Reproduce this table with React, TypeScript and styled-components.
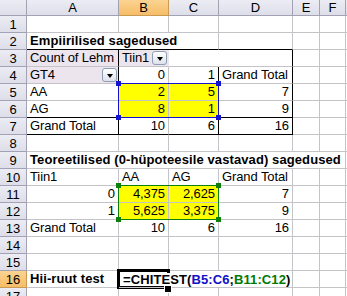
import React from 'react';
import styled, { createGlobalStyle } from 'styled-components';

const GRID = '#c4c4c8';
const DARK = '#000000';
const LAV = '#ece5ee';
const YEL = '#ffff00';
const HEAD_BORDER = '#a2a2b4';

const Global = createGlobalStyle`
  html, body { margin: 0; padding: 0; background: #fff; overflow: hidden; }
  body { font-family: "Liberation Sans", Arial, sans-serif; font-size: 13px; color: #000; }
`;

const Sheet = styled.div`
  position: relative;
  display: grid;
  grid-template-columns: 27px 92px 50px 50px 74px 27px 26px 40px;
  grid-template-rows: 16px repeat(17, 17px);
  width: 386px;
`;

const Head = styled.div<{ $sel?: boolean }>`
  box-sizing: border-box;
  border-right: 1px solid ${(p) => (p.$sel ? '#c89a54' : HEAD_BORDER)};
  border-bottom: 1px solid ${(p) => (p.$sel ? '#c89a54' : HEAD_BORDER)};
  background: ${(p) => (p.$sel ? 'linear-gradient(#fbd391, #f6bd68)' : 'linear-gradient(#ececf4, #dedeea)')};
  display: flex;
  align-items: center;
  justify-content: center;
  font-size: 13px;
  line-height: 15px;
`;

const Cell = styled.div<{
  $span?: number;
  $right?: boolean;
  $bold?: boolean;
  $bg?: string;
  $r?: string;
  $b?: string;
  $pr?: number;
  $top?: boolean;
}>`
  grid-column: span ${(p) => p.$span ?? 1};
  box-sizing: border-box;
  position: relative;
  z-index: ${(p) => (p.$top ? 3 : 0)};
  border-right: 1px solid ${(p) => p.$r ?? GRID};
  border-bottom: 1px solid ${(p) => p.$b ?? GRID};
  background: ${(p) => p.$bg ?? (p.$top ? 'transparent' : '#fff')};
  display: flex;
  align-items: center;
  justify-content: ${(p) => (p.$right ? 'flex-end' : 'flex-start')};
  padding: 0 ${(p) => p.$pr ?? 3}px 0 3px;
  line-height: 16px;
  font-weight: ${(p) => (p.$bold ? 700 : 400)};
  letter-spacing: ${(p) => (p.$bold ? '0.1px' : '-0.1px')};
  white-space: nowrap;
  min-width: 0;
`;

const DropBtn = styled.span`
  box-sizing: border-box;
  width: 15px;
  height: 14px;
  margin-left: auto;
  border: 1px solid #8f9db5;
  border-radius: 3px;
  background: linear-gradient(#ffffff, #dde2ec);
  display: flex;
  align-items: center;
  justify-content: center;
`;

const Tri = styled.span`
  width: 0;
  height: 0;
  border-left: 3.5px solid transparent;
  border-right: 3.5px solid transparent;
  border-top: 4px solid #000;
  margin-top: 1px;
`;

const Range = styled.div<{ $c: string }>`
  position: absolute;
  box-sizing: border-box;
  border: 1px solid ${(p) => p.$c};
  pointer-events: none;
  z-index: 2;
`;

const Handle = styled.span<{ $c: string; $pos: 'tl' | 'tr' | 'bl' | 'br' }>`
  position: absolute;
  width: 5px;
  height: 5px;
  background: ${(p) => p.$c};
  ${(p) => (p.$pos[0] === 't' ? 'top: -3px;' : 'bottom: -3px;')}
  ${(p) => (p.$pos[1] === 'l' ? 'left: -3px;' : 'right: -3px;')}
`;

const ActiveBox = styled.div`
  position: absolute;
  box-sizing: border-box;
  left: 117px;
  top: 269px;
  width: 53px;
  height: 20px;
  border: 3px solid #000;
  z-index: 2;
`;

const FillHandle = styled.div`
  position: absolute;
  left: 164px;
  top: 285px;
  width: 6px;
  height: 6px;
  background: #000;
  border: 1px solid #fff;
  z-index: 4;
`;

const Formula = styled.span`
  background: #fff;
  line-height: 13px;
  margin-left: 1px;
`;

const RefBlue = styled.span`
  color: #1010c8;
`;
const RefGreen = styled.span`
  color: #007a00;
`;

type Spec = {
  t?: React.ReactNode;
  span?: number;
  right?: boolean;
  bold?: boolean;
  bg?: string;
  r?: string;
  b?: string;
  btn?: boolean;
  pr?: number;
  top?: boolean;
};

const NCOLS = 7;

const formula = (
  <Formula>
    =CHITEST(<RefBlue>B5:C6</RefBlue>;<RefGreen>B11:C12</RefGreen>)
  </Formula>
);

const rows: Spec[][] = [
  [],
  [{ t: 'Empiirilised sagedused', bold: true, span: 3, b: DARK }, { b: DARK }],
  [
    { t: 'Count of Lehm', bg: LAV, r: DARK },
    { t: 'Tiin1', bg: LAV, btn: true, pr: 1, r: 'transparent' },
    { r: 'transparent' },
    { r: DARK },
  ],
  [
    { t: 'GT4', bg: LAV, btn: true, pr: 1, r: DARK },
    { t: '0', right: true },
    { t: '1', right: true, r: DARK },
    { t: 'Grand Total', r: DARK },
  ],
  [
    { t: 'AA', r: DARK },
    { t: '2', right: true, bg: YEL },
    { t: '5', right: true, bg: YEL, r: DARK },
    { t: '7', right: true, r: DARK },
  ],
  [
    { t: 'AG', r: DARK, b: DARK },
    { t: '8', right: true, bg: YEL, b: DARK },
    { t: '1', right: true, bg: YEL, r: DARK, b: DARK },
    { t: '9', right: true, r: DARK, b: DARK },
  ],
  [
    { t: 'Grand Total', r: DARK, b: DARK },
    { t: '10', right: true, b: DARK },
    { t: '6', right: true, r: DARK, b: DARK },
    { t: '16', right: true, r: DARK, b: DARK },
  ],
  [],
  [{ t: 'Teoreetilised (0-hüpoteesile vastavad) sagedused', bold: true, span: 6 }],
  [{ t: 'Tiin1' }, { t: 'AA' }, { t: 'AG' }, { t: 'Grand Total' }],
  [
    { t: '0', right: true },
    { t: '4,375', right: true, bg: YEL },
    { t: '2,625', right: true, bg: YEL },
    { t: '7', right: true },
  ],
  [
    { t: '1', right: true },
    { t: '5,625', right: true, bg: YEL },
    { t: '3,375', right: true, bg: YEL },
    { t: '9', right: true },
  ],
  [{ t: 'Grand Total' }, { t: '10', right: true }, { t: '6', right: true }, { t: '16', right: true }],
  [],
  [],
  [{ t: 'Hii-ruut test', bold: true }, { t: formula, bold: true, span: 3, top: true, pr: 0 }],
  [],
];

const padRow = (r: Spec[]): Spec[] => {
  const used = r.reduce((s, c) => s + (c.span ?? 1), 0);
  const out = [...r];
  for (let i = used; i < NCOLS; i++) out.push({});
  return out;
};

const COL_LABELS = ['A', 'B', 'C', 'D', 'E', 'F', ''];

const Corners = ({ c }: { c: string }) => (
  <>
    <Handle $c={c} $pos="tl" />
    <Handle $c={c} $pos="tr" />
    <Handle $c={c} $pos="bl" />
    <Handle $c={c} $pos="br" />
  </>
);

export default function App() {
  return (
    <>
      <Global />
      <Sheet>
        <Head />
        {COL_LABELS.map((l, i) => (
          <Head key={i} $sel={l === 'B'}>
            {l}
          </Head>
        ))}
        {rows.map((r, ri) => (
          <React.Fragment key={ri}>
            <Head $sel={ri + 1 === 16}>{ri + 1}</Head>
            {padRow(r).map((c, ci) => (
              <Cell
                key={ci}
                $span={c.span}
                $right={c.right}
                $bold={c.bold}
                $bg={c.bg}
                $r={c.r}
                $b={c.b}
                $pr={c.pr}
                $top={c.top}
              >
                {c.t}
                {c.btn && (
                  <DropBtn>
                    <Tri />
                  </DropBtn>
                )}
              </Cell>
            ))}
          </React.Fragment>
        ))}
        <Range $c="#1414d0" style={{ left: 118, top: 83, width: 101, height: 35 }}>
          <Corners c="#1414d0" />
        </Range>
        <Range $c="#0a800a" style={{ left: 118, top: 185, width: 101, height: 35 }}>
          <Corners c="#0a800a" />
        </Range>
        <ActiveBox />
        <FillHandle />
      </Sheet>
    </>
  );
}
